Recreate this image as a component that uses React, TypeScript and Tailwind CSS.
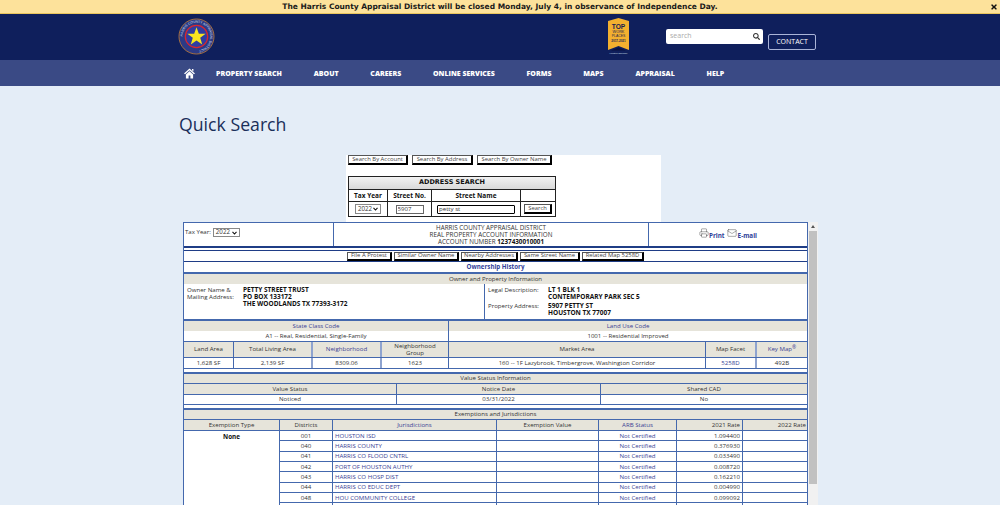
import React from "react";
import { FaSearch, FaTimes } from "react-icons/fa";
import { Printer, Mail } from "lucide-react";

const nav = ["PROPERTY SEARCH", "ABOUT", "CAREERS", "ONLINE SERVICES", "FORMS", "MAPS", "APPRAISAL", "HELP"];
const rates = [
  ["001", "HOUSTON ISD", "1.094400"],
  ["040", "HARRIS COUNTY", "0.376930"],
  ["041", "HARRIS CO FLOOD CNTRL", "0.033490"],
  ["042", "PORT OF HOUSTON AUTHY", "0.008720"],
  ["043", "HARRIS CO HOSP DIST", "0.162210"],
  ["044", "HARRIS CO EDUC DEPT", "0.004990"],
  ["048", "HOU COMMUNITY COLLEGE", "0.099092"],
  ["", "", ""],
];

function Logo() {
  return (
    <svg width="37" height="37" viewBox="0 0 38 38" className="shrink-0">
      <defs>
        <path id="ring" d="M19 19 m-14.2 0 a14.2 14.2 0 1 1 28.4 0 a14.2 14.2 0 1 1 -28.4 0" />
      </defs>
      <circle cx="19" cy="19" r="18" fill="#2c3a86" stroke="#a8703f" strokeWidth="1" />
      <text fontSize="3.4" fill="#dfe3f2" fontFamily="'Liberation Sans', sans-serif">
        <textPath href="#ring">HARRIS COUNTY APPRAISAL DISTRICT</textPath>
      </text>
      <circle cx="19" cy="19" r="11.5" fill="#2f3da0" stroke="#d8262e" strokeWidth="1.3" />
      <polygon points="19,9.5 21.4,16.2 28.4,16.2 22.8,20.4 24.9,27.3 19,23.2 13.1,27.3 15.2,20.4 9.6,16.2 16.6,16.2" fill="#f8e51f" />
    </svg>
  );
}

function Badge() {
  const f = "'Liberation Sans', sans-serif";
  return (
    <svg width="21" height="38" viewBox="0 0 21 38" className="shrink-0">
      <polygon points="0,3 10.5,0 21,3 21,32 10.5,28 0,32" fill="#f3b02f" />
      <polygon points="3,32.5 10.5,29.5 18,32.5" fill="#0a1240" />
      <text x="10.5" y="11" textAnchor="middle" fontSize="6.6" fontWeight="700" fill="#17204f" fontFamily={f}>TOP</text>
      <text x="10.5" y="15" textAnchor="middle" fontSize="3.8" fill="#17204f" fontFamily={f}>WORK</text>
      <text x="10.5" y="18.6" textAnchor="middle" fontSize="3.4" fill="#17204f" fontFamily={f}>PLACES</text>
      <text x="10.5" y="24.4" textAnchor="middle" fontSize="3" fontWeight="700" fill="#17204f" fontFamily={f}>2017-2021</text>
      <text x="10.5" y="36" textAnchor="middle" fontSize="2.2" fill="#dfe3f2" fontFamily={f}>Houston Chronicle</text>
    </svg>
  );
}

function HomeIcon() {
  return (
    <svg width="11" height="11" viewBox="0 0 11 11" className="mr-[21px] shrink-0">
      <path d="M5.5 0.5 L11 5.6 L9.9 6.2 L5.5 2.2 L1.1 6.2 L0 5.6 Z M8 1 H9.4 V3.4 L8 2.2 Z M1.9 6.4 L5.5 3.2 L9.1 6.4 V10.5 H6.4 V7.4 H4.6 V10.5 H1.9 Z" fill="#fff" />
    </svg>
  );
}

function Btn({ children, className = "" }: { children: React.ReactNode; className?: string }) {
  return (
    <button className={`flex items-center justify-center border-t border-l border-t-[#555] border-l-[#555] border-r-2 border-b-2 border-r-black border-b-black bg-white text-[5.9px] font-normal text-[#444] leading-none whitespace-nowrap ${className}`}>
      {children}
    </button>
  );
}

function FakeSelect({ className = "" }: { className?: string }) {
  return (
    <div className={`flex items-center justify-between border border-[#888] bg-white px-[2px] text-[6.2px] font-normal leading-none text-[#333] ${className}`}>
      <span>2022</span>
      <svg width="5" height="4" viewBox="0 0 5 4"><path d="M0.5 0.8 L2.5 3 L4.5 0.8" fill="none" stroke="#111" strokeWidth="1.1" /></svg>
    </div>
  );
}

function Band({ children, className = "" }: { children: React.ReactNode; className?: string }) {
  return <div className={`flex items-center justify-center bg-[#e6e4da] text-[6.1px] text-[#333] leading-none ${className}`}>{children}</div>;
}

function Cell({ children, className = "" }: { children?: React.ReactNode; className?: string }) {
  return <div className={`flex items-center justify-center text-[6.1px] text-[#333] leading-none ${className}`}>{children}</div>;
}

const line = "border-r border-r-[#4468ad]";
const soft = "border-r-2 border-r-[#8ea3cf]";

export default function App() {
  return (
    <div className="h-[505px] w-[1000px] overflow-hidden bg-[#e4edf7] font-['Open_Sans',sans-serif]">
      <div className="relative flex h-[14px] items-center justify-center border-b border-b-[#e9c55f] bg-[#fde29b] font-['DejaVu_Sans',sans-serif] text-[7.5px] font-bold text-[#1a1a1a]">
        The Harris County Appraisal District will be closed Monday, July 4, in observance of Independence Day.
        <FaTimes className="absolute right-[2px] top-[3px] text-[8px] text-[#111]" />
      </div>

      <header className="flex h-[46px] items-start bg-[#0f1f5c] pl-[178px] pt-[4px]">
        <Logo />
        <div className="ml-[393px]"><Badge /></div>
        <div className="ml-[37px] mt-[11px] flex h-[15px] w-[97px] items-center justify-between rounded-[2px] bg-white pl-[4px] pr-[3px]">
          <span className="text-[7px] text-[#aaa]">search</span>
          <FaSearch className="text-[7px] text-[#333]" />
        </div>
        <button className="ml-[5px] mt-[16px] flex h-[16px] w-[48px] items-center justify-center rounded-[2px] border border-[#aab4d8] text-[7px] text-white">
          CONTACT
        </button>
      </header>

      <nav className="flex h-[26px] items-center bg-[#3a4a85] pl-[184px]">
        <HomeIcon />
        <div className="flex gap-[31.8px]">
          {nav.map((n) => (
            <span key={n} className="text-[7px] font-extrabold leading-none text-white">{n}</span>
          ))}
        </div>
      </nav>

      <h1 className="ml-[179px] mt-[24px] h-[45px] text-[17.7px] leading-[28px] text-[#1a2f5a]">Quick Search</h1>

      <div className="ml-[346px] h-[67px] w-[315px] bg-white px-[2px]">
        <div className="flex gap-[4px]">
          <Btn className="h-[10px] w-[60px]">Search By Account</Btn>
          <Btn className="h-[10px] w-[61px]">Search By Address</Btn>
          <Btn className="h-[10px] w-[75px]">Search By Owner Name</Btn>
        </div>
        <div className="mt-[11px] w-[208px] border border-[#222] text-[6.5px] font-bold text-[#111]">
          <div className="flex h-[13px] items-center justify-center border-b border-b-[#222] bg-gradient-to-b from-[#f2f2f2] to-[#d9d9d9] font-['DejaVu_Sans',sans-serif]">ADDRESS SEARCH</div>
          <div className="grid h-[12px] grid-cols-[39px_44px_89px_34px] border-b border-b-[#222]">
            <div className="flex items-center justify-center border-r border-r-[#222]">Tax Year</div>
            <div className="flex items-center justify-center border-r border-r-[#222]">Street No.</div>
            <div className="flex items-center justify-center border-r border-r-[#222]">Street Name</div>
            <div />
          </div>
          <div className="grid h-[14px] grid-cols-[39px_44px_89px_34px]">
            <div className="flex items-center justify-center border-r border-r-[#222]">
              <FakeSelect className="h-[10px] w-[26px]" />
            </div>
            <div className="flex items-center justify-center border-r border-r-[#222]">
              <input readOnly value="5907" className="h-[9px] w-[28px] border border-[#666] pl-[1px] text-[6.1px] font-normal text-[#333]" />
            </div>
            <div className="flex items-center justify-center border-r border-r-[#222]">
              <input readOnly value="petty st" className="h-[9px] w-[78px] rounded-[1px] border border-black pl-[1px] text-[6.1px] font-normal text-[#333]" />
            </div>
            <div className="flex items-center justify-center">
              <Btn className="h-[10px] w-[28px]">Search</Btn>
            </div>
          </div>
        </div>
      </div>

      <div className="ml-[183px] flex h-[283px] w-[635px]">
        <div className="w-[625px] border-x border-t border-x-[#4468ad] border-t-[#4468ad] bg-white">
          <div className="grid h-[25px] grid-cols-[150px_315px_158px] border-b-2 border-b-[#1f3d86]">
            <div className={`flex items-start pl-[1px] pt-[5px] text-[6.1px] leading-none text-[#333] ${line}`}>
              <span className="mr-[2px] mt-[1px]">Tax Year:</span>
              <FakeSelect className="h-[9px] w-[27px]" />
            </div>
            <div className={`flex flex-col items-center justify-center text-[6.3px] leading-[7px] text-[#333] ${line}`}>
              <span>HARRIS COUNTY APPRAISAL DISTRICT</span>
              <span>REAL PROPERTY ACCOUNT INFORMATION</span>
              <span>ACCOUNT NUMBER <b className="text-[#111]">1237430010001</b></span>
            </div>
            <div className="flex items-center justify-center text-[6.3px] font-bold leading-none text-[#2f3f9a]">
              <Printer size={10} strokeWidth={1} className="mb-[3px] text-[#333]" />
              <span className="mt-[3px] mr-[2px]">Print</span>
              <Mail size={10} strokeWidth={1} className="mb-[3px] text-[#333]" />
              <span className="mt-[3px] ml-[1px]">E-mail</span>
            </div>
          </div>
          <div className="h-[2px]" />
          <div className="flex h-[12px] justify-center gap-[2px] border-y border-y-[#1f3d86] pt-px">
            <Btn className="w-[45px]">File A Protest</Btn>
            <Btn className="w-[65px]">Similar Owner Name</Btn>
            <Btn className="w-[57px]">Nearby Addresses</Btn>
            <Btn className="w-[60px]">Same Street Name</Btn>
            <Btn className="w-[62px]">Related Map 5258D</Btn>
          </div>
          <div className="flex h-[10px] items-center justify-center text-[6.2px] font-bold leading-none text-[#2f3f9a]">Ownership History</div>
          <div className="h-[2px] bg-[#4468ad]" />
          <Band className="h-[10px]">Owner and Property Information</Band>
          <div className="grid h-[37px] grid-cols-[301px_322px] border-b-2 border-b-[#4468ad] text-[6.5px] leading-[6.9px]">
            <div className={`flex pl-[3px] pt-[3px] text-[#333] ${line}`}>
              <div className="w-[56px] text-[6.1px]">Owner Name &amp;<br />Mailing Address:</div>
              <div className="font-bold text-[#111]">PETTY STREET TRUST<br />PO BOX 133172<br />THE WOODLANDS TX 77393-3172</div>
            </div>
            <div className="flex flex-col gap-[1px] pl-[3px] pt-[3px] text-[#333]">
              <div className="flex h-[15px]">
                <div className="w-[60px] text-[6.1px]">Legal Description:</div>
                <div className="font-bold text-[#111]">LT 1 BLK 1<br />CONTEMPORARY PARK SEC 5</div>
              </div>
              <div className="flex">
                <div className="w-[60px] text-[6.1px]">Property Address:</div>
                <div className="font-bold text-[#111]">5907 PETTY ST<br />HOUSTON TX 77007</div>
              </div>
            </div>
          </div>

          <div className="grid h-[10px] grid-cols-[265px_358px]">
            <Band className={line}><span className="text-[#3a3f94]">State Class Code</span></Band>
            <Band><span className="text-[#3a3f94]">Land Use Code</span></Band>
          </div>
          <div className="grid h-[11px] grid-cols-[265px_358px] border-b border-b-[#4468ad]">
            <Cell className={line}>A1 -- Real, Residential, Single-Family</Cell>
            <Cell>1001 -- Residential Improved</Cell>
          </div>
          <div className="grid h-[16px] grid-cols-[50px_79px_69px_67px_257px_51px_50px] border-b border-b-[#4468ad]">
            <Band className={line}>Land Area</Band>
            <Band className={soft}>Total Living Area</Band>
            <Band className={soft}><span className="text-[#3a3f94]">Neighborhood</span></Band>
            <Band className={`text-center leading-[7px] ${line}`}>Neighborhood<br />Group</Band>
            <Band className={line}>Market Area</Band>
            <Band className={soft}>Map Facet</Band>
            <Band><span className="text-[#3a3f94]">Key Map<sup className="text-[5px]">®</sup></span></Band>
          </div>
          <div className="grid h-[11px] grid-cols-[50px_79px_69px_67px_257px_51px_50px] border-b border-b-[#4468ad]">
            <Cell className={line}>1,628 SF</Cell>
            <Cell className={soft}>2,139 SF</Cell>
            <Cell className={soft}>8309.06</Cell>
            <Cell className={line}>1623</Cell>
            <Cell className={line}>160 -- 1F Lazybrook, Timbergrove, Washington Corridor</Cell>
            <Cell className={soft}><span className="text-[#3a3f94]">5258D</span></Cell>
            <Cell>492B</Cell>
          </div>
          <div className="h-[3px]" />
          <div className="h-[2px] bg-[#4468ad]" />
          <Band className="h-[9px]">Value Status Information</Band>
          <div className="h-px bg-[#4468ad]" />
          <div className="grid h-[10px] grid-cols-[213px_204px_206px]">
            <Band className={line}>Value Status</Band>
            <Band className={line}>Notice Date</Band>
            <Band>Shared CAD</Band>
          </div>
          <div className="grid h-[10px] grid-cols-[213px_204px_206px] border-t border-t-[#4468ad]">
            <Cell className={line}>Noticed</Cell>
            <Cell className={line}>03/31/2022</Cell>
            <Cell>No</Cell>
          </div>
          <div className="h-[1px] bg-[#4468ad]" />
          <div className="h-[3px]" />
          <div className="h-[2px] bg-[#4468ad]" />
          <Band className="h-[9px]">Exemptions and Jurisdictions</Band>
          <div className="h-px bg-[#4468ad]" />
          <div className="grid h-[11px] grid-cols-[96px_53px_164px_102px_78px_66px_64px] border-b border-b-[#4468ad]">
            <Band className={line}>Exemption Type</Band>
            <Band className={line}>Districts</Band>
            <Band className={line}><span className="text-[#3a3f94]">Jurisdictions</span></Band>
            <Band className={line}>Exemption Value</Band>
            <Band className={line}><span className="text-[#3a3f94]">ARB Status</span></Band>
            <Band className={`justify-end pr-[2px] ${line}`}>2021 Rate</Band>
            <Band className="justify-end pr-[1px]">2022 Rate</Band>
          </div>
          <div className="grid grid-cols-[96px_527px]">
            <div className={`flex justify-center pt-[1px] text-[6.3px] font-bold text-[#111] ${line}`}>None</div>
            <div>
              {rates.map((r, i) => (
                <div key={i} className="grid h-[10.33px] grid-cols-[53px_164px_102px_78px_66px_64px] border-b border-b-[#4468ad]">
                  <Cell className={line}>{r[0]}</Cell>
                  <Cell className={`justify-start pl-[2px] ${line}`}><span className="text-[#3a3f94]">{r[1]}</span></Cell>
                  <Cell className={line} />
                  <Cell className={line}><span className="text-[#3a3f94]">{r[1] ? "Not Certified" : ""}</span></Cell>
                  <Cell className={`justify-end pr-[2px] ${line}`}>{r[2]}</Cell>
                  <Cell />
                </div>
              ))}
            </div>
          </div>
        </div>
        <div className="flex w-[10px] flex-col items-center bg-[#f1f1f1]">
          <svg width="6" height="9" viewBox="0 0 6 9" className="shrink-0">
            <polygon points="3,3 5,6 1,6" fill="#555" />
          </svg>
          <div className="h-[253px] w-[8px] bg-[#c1c1c1]" />
        </div>
      </div>
    </div>
  );
}
